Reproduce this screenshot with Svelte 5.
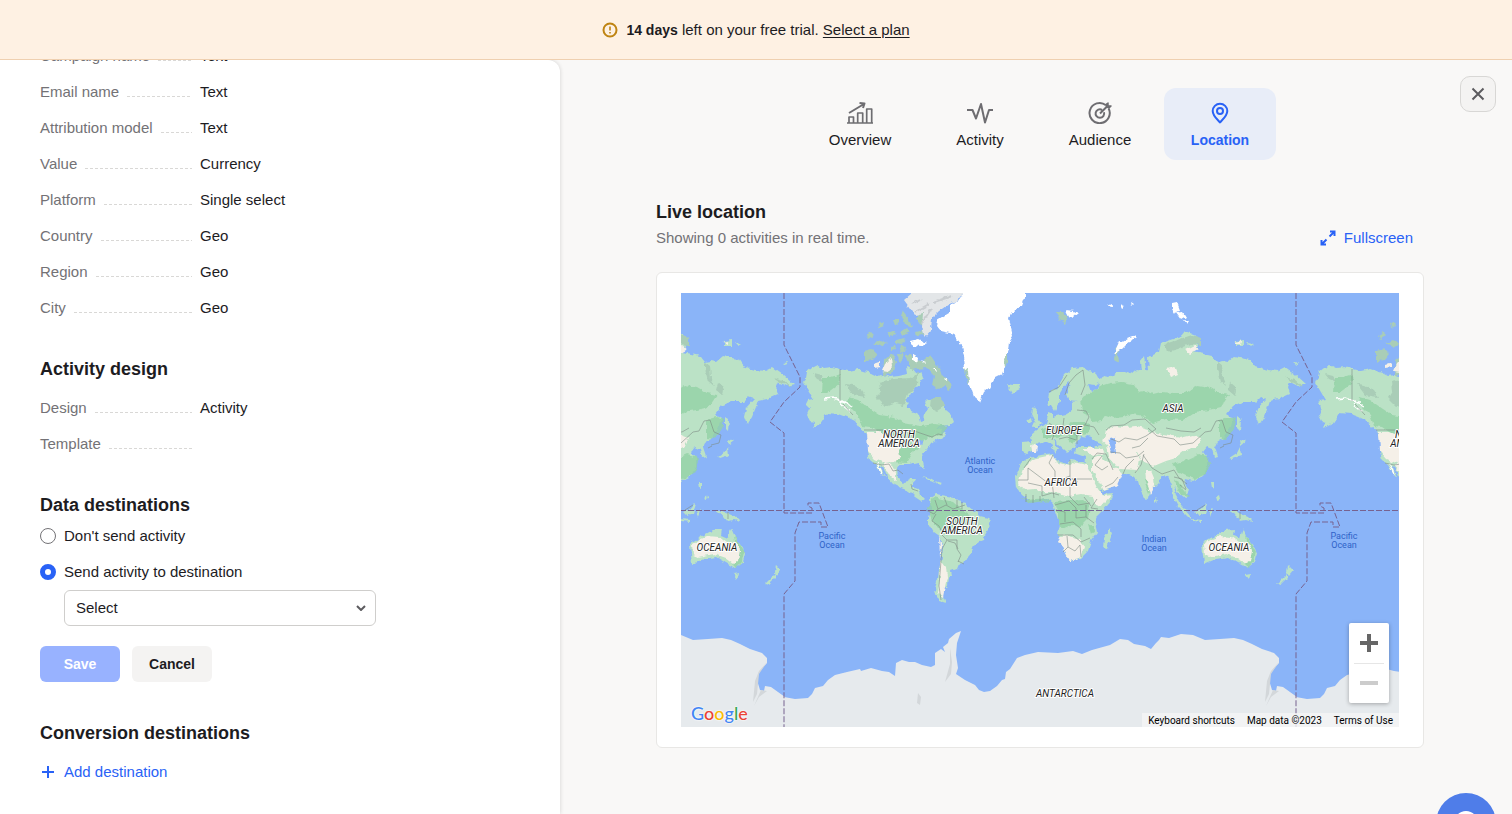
<script>
	const fields = [
		{ name: 'Campaign name', value: 'Text' },
		{ name: 'Email name', value: 'Text' },
		{ name: 'Attribution model', value: 'Text' },
		{ name: 'Value', value: 'Currency' },
		{ name: 'Platform', value: 'Single select' },
		{ name: 'Country', value: 'Geo' },
		{ name: 'Region', value: 'Geo' },
		{ name: 'City', value: 'Geo' }
	];

	const design = [
		{ name: 'Design', value: 'Activity' },
		{ name: 'Template', value: '' }
	];

	const tabs = ['Overview', 'Activity', 'Audience', 'Location'];

	let activeTab = $state('Location');
	let destination = $state('send');

	// one world is 512 units wide, so it is repeated on both sides
	const worlds = [-512, 0, 512];

	const land = [
		// north and central america
		'M803 382l3-4 1-6 5-4 6-3 6 3 8-1 9 2 8 2 9-2 6 2 7 2 6 3 6-1 7 2 9-1 8-2-1-8 6 2 5 6 4-2 2 6-4 3 2 5-6 1-5 8-4 6 1 7 7 4 5 3 2 7 3-1 1-8 3-4-3-7 3-3 7 2 4 5 4-2 3 7 6 5 2 5-5 4-7 1-6 1 5 2-1 4 5-1 1 3-9 5-6 4-4 6-5 6 0 5 2 9-3-3-3-5-9 2-9 0-3 5 1 9 6 5 4-1 2-4 5 0-3 6 0 3 6 2 2 6 4 4-3 2-6-4-6-6-8-3-8-4-6-7-3-8-4-4-1 0 7 13-6-6-4-7-6-5-2-8 1-10-3-9-7-6-4-6-8-4-8-3-12-1-3 5-4 6-8 4 2-6-4-1-3-6 3-7-4-4 2-4 5-1z',
		// south america
		'M930 498l6-4 5 1 6 1 7 1 4 4 7 2 4 6 8 3 3 4 8 2 3 3-2 7-4 7-2 6-8 3-3 7-5 6-3 6-5 1-2 5-6 2 1 5-4 2-1 8-4 3 0 7 3 7-6-2-4-7-1-6 3-9 1-10 3-12 1-12-2-7-7-5-6-10 0-6 3-7z',
		// europe and asia
		'M1048 400l1-7 6-3 5-7 5-9 8-6 8-1 7 3 8 4 4 7-4 4-8-1 3 8 6-4 3-8 3-4 6 1 7-5 9 0 5 2 6-4 5 1-1-10 4-5 2 14 3-1-1-10 5-4 6-3 2-9 12-4 8-3 4-5 10 4 2 11-4 6 10 2 9 2 5 6 6-1 5 1 7-6 9 2 6 1 5 7 13 4 9 1 8-4 10 7 11 10-8 2-8-4-2 5 2 7-11 5-9 2-2 6-4 10-5 8-3-8 2-9 8-9-6-2-5 5-13 0-9 4-6 8 6 4-3 11-7 10-6 4-2 4 3 9-4 1-2-8-5-2-4 5 5 6 0 8-5 10-10 5-8-2-1 6 5 6-4 7-7-6-4-5 3 11 5 9-4-1-5-9-1-11-4-10-5-1-3 6-8 8-3 7-4 3-4-7-3-11-6-6-6-2-13 0 4 5-5 9-15 6-3-6-10-17 1-13-11-4 2-6 18 0 3-2-6-7-10-1-5 7-2 4-7 4-3-3-7-6-5-4 6 9-2 5-6-10-4-2-9 2-3 8-7 3-5-2 0-9 10-1-1-7 6-5 9-7 2-7 1-4 3 1 0 4 13-3 7-4 0-8 6-1-10-1-2-5 4-13-5 3-5 8 0 8-5 10-3-5-6-1z',
		// africa
		'M1033 457l8-2 12-2 1 5 4 3 9 3 4-4 17 3 3 9 6 15 5 7 12-1-2 6-10 12-7 7 3 14-7 9-3 10-7 7-12 3-3-6-5-12-3-9 2-9-5-14-2-8-6-5-17 3-8-6-6-8-1-10 6-14 7-5z',
		// australia and tasmania
		'M1202 543l7-4 7-4 9-5 9-1-1 6 7 3 3-10 4 9 7 9 3 8-2 8-8 6-9-5-10-6-12 2-12 5-1-9z',
		'M1245 574l6-1-2 6z',
		// new zealand
		'M1288 565l5 5-5 6-1-4zM1287 574l0 4-7 7-3-1z',
		// islands of the pacific
		'M1228 511l6 0 7 3 7 3 5 5-7-2-6 1-4-5zM1195 512l7-3 5-6 1 1-3 9-6 3zM1177 501l7 7 7 8 0 4-8-8zM1192 519l10 1 0 2-9-1zM1209 511l4-2-2 5 0 3zM1211 482l3 0 0 7-2-1zM1216 497l3-2 1 4-3 1z',
		// japan and sakhalin
		'M1237 417l4 3-1 11-3-3zM1240 439l6 2-5 4zM1240 447l1 9-9 3-3-1 8-5z',
		// madagascar, sri lanka
		'M1110 528l2 6-5 14-4-1 1-9zM1155 498l2 3-2 2z',
		// british isles, iceland
		'M1033 407l3 4 2 8 4 5-3 3-7 0 3-6-3-6zM1027 420l4-3 1 5-5 2zM1007 384l7 1 5 0 1 4-8 4z',
		// wrangel and new siberian islands
		'M1236 341l8-1 0 6-8 0zM1247 343l6 1-3 2zM1294 363l5-1-2 3z',
		// caribbean
		'M922 477l8 2 7 4-8-2zM936 481l6 2-3 2z'
	];

	const arctic = [
		'M905 355l6-1 4 7 4-2 4 4 2-7 6 0 4 6 6 8 2 6 8 7 1 5-4 2-3-4-6 3-7-4 2-9-7-8-9 1-7 1z',
		'M864 351l8-2 5 5-5 6-8 2zM874 343l7-3 6 3-6 4zM866 335l5-3 3 3-6 4zM878 324l7-2-1 4-5 2zM887 332l6-2 3 5-5 2zM884 360l9-7 3 9-4 12-9 1zM901 332l6-4 3 4-6 3zM896 340l9-2-3 6-6-1z',
		'M903 311l6 8 3 9-6-3-5-8zM893 320l5 0 1 6-4-1zM917 309l7 2-1 14-6-4zM915 332l8-2 1 5-8 1zM890 346l5-1 1 4-5 1zM901 345l5 3-1 4-5-1zM898 354l4-2 1 8-4 3z',
		'M1057 312l6 0 5 4-3 8-5-4zM1114 360l1-10 4-5 2 2-3 6 1 10z'
	];

	const ice = [
		// greenland
		'M963 280v13l-4 7-9 5 0 8-13 8-1 4 5 6 13 3 3 6 5 6 2 10 1 12 3 8 3 12 3 9 6 5 4-10 5-4 5-9 8-4 3-8 1-9 3-8 1-9 3-5-2-9-2-9 4-7 9-5 3-8V280z',
		'M1114 354l5-11 9-5 8-3 0 2-10 7-6 6zM1066 310l8 1 4 2-6 5-3-2zM1108 306l4-2 0 3zM1120 304l5 2-3 2zM1130 302l3 2-2 2z',
		'M1172 303l5-1 3 8-5 4-3-5zM1176 313l7-1 3 5-5 3zM1184 320l5 1-2 3z',
		'M911 341l8-2 8 4-6 4-9-1zM913 354l5 4-1 6-4-3zM921 360l5 2-2 2zM934 369l3 0 0 3zM944 378l3 2-1 2z'
	];

	const ellesmere = 'M904 300l8-7V280h51v13l-6 8-8 3-10 7-7 7-1 12-6 7-3-10 1-14-8 2z';

	// darker forest over the light green
	const forest = [
		'M1081 398l9-5 10-7 10-3 12-1 11 2 5 8 7-1 8 3 8-2 12 1 13 0 11-8 12 2 10 6 10 2-8 12-12 3-14 2-12 8-17-1-14 4-8-7-12-2-9 3-9 1-8-3-4 6-10 1-3-7-6-3z',
		'M1042 430l10-5 12 2 8-5 13 0 6 6-4 6-8 2-6 8-8-9-14 3-9 0zM1219 420l10-3 7 2-2 10-8 10-7-1z',
		'M848 397l10 3 10 7 12 8 14 2 9 6 18 3 14-2 13 2-6 7-10 4-9 3-4 8-8 6-5 9-14-1-2-12-7-14-13-9-8-1-4-11-11-11zM823 377l8 0 10-3-2 10-12 9-5 0z',
		'M928 508l5-11 8 2 12 3 8 7 10 6-4 9-12 0-8 12-8-7-7-8z',
		'M1054 502l15-1 14-1 7 5-2 14-8 8-9-2-9 4-4-7 0-10zM1020 497l7 3 20-2 4 3-20 3zM1088 524l6 2 1 6-4 2z',
		'M1172 464l12-3 15-7 8 2 4 7-5 11-11 5-9-3-10-5zM1173 478l6 3 5 11 5 4-7-1-6-9zM1144 480l6-2 3 8-4 8zM1246 536l6 8 4 8-2 9-6 7-4-4 6-8z'
	];

	// dry ground
	const dry = [
		'M1018 483l5-14 10-10 19-4 5 7 11 4 5-4 14 3 4 9 7 15 5 7 8-1-10 12-6-2-2-9-12-2-12 2-10-3-9-1-8 0-8-3-10 1z',
		'M1092 459l8-3 5 5 15 10 2 5-4 9-15 5-3-6-8-14zM1083 448l16 0 7 5-13 3zM1058 536l10-1 11 5 5 7-4 11-11 3-5-10z',
		'M1106 430l8-4 11 1 12-1 11 3 4 10-4 8-12 5 4 7-2 11-19-1-10-12-2-12-4-3z',
		'M1143 440l9-8 17 3 11 3 13-3 8 3-5 9-10 3-10 8-10 3-12 5-12-5-5-9-5-6zM1167 369l8-2 3 7-7 3zM1184 350l10-5 5 4-9 5z',
		'M867 432l11 0 12 5 9 8 1 13-6 4-10 1-9-4-7-8zM885 463l6 1 5 9 0 8-5-4-8-11z',
		'M1145 470l5 0 3 7 1 13-3 5-5-15z',
		'M939 535l3 12-2 12 6 8 1 10-4 20-5-4 2-16 0-20zM1204 544l8-5 8-3 11 1 8 6 8-1 5 8-2 11-5 3-8-6-11-4-16 3-5-2z',
		'M1235 342l6-1-1 4zM1031 444l7 3-1 5-5 0z'
	];

	const sand = 'M885 364l6-6 1 8-4 6-6-1zM874 364l6-2 0 5-6 1zM913 354l4 2-1 6-3-1z';

	const tundra = [
		'M879 382l14-3 17-1 8-6-1 13-9 9-4 11-9-2-10 4-9-9 4-7zM930 398l10 0 6 7-9 6-8-4z',
		'M1165 344l18-6 9-3 9 3 0 7-11-1-12 5-11 3zM1217 362l5 4 1 13 3 7-6-5-3-12zM1230 383l6 5-1 8-7-6zM1285 377l10 3 8 7-9-4z',
		'M845 384l8 1 9 5 4 7-13-2zM813 374l8 2 4 6-8-3z'
	];

	const borders =
		'M840 369V401M843 404l10 11M864 430h48l8 3 12 4 6-3 5 1M873 463l9 2 7-1 4 7 5-1 5 4M911 484l1 5 6 2M1065 395l4-12 7-8 7-5 2 15-4 10M1049 392l10-5 8-12M1077 410l9 1 3 6-4 8-10 2-7 4-5-5 1-8M1049 423l7 5-4 12M1059 439l8-2 9 3M1070 430l7 6 0 8M1085 425l9 2 5 8M1106 430l5-4 13-1 8-5 13-1 11 10-10 7-9 4-12-2-6 4-8-3M1148 428l9 8 17 3 6 6 13-2 12-11 6-1 5-10 6-1 4 12 7 3-2 8-8 2M1166 428l15 3 13 1 7-4M1132 448l8-2 8-8M1110 452l10 1 6 5 12-2 6-5M1123 474l3-7 8-8M1135 473l6-8 3-11M1143 455l9 13 10 6 12-4 5 8 8 6M1092 459l5-6 9 1 7 16M1102 456l-7 9 7 5 6-4M1105 487l8-4 5-6M1174 477l8 2 4 10M1220 448l4-2M1180 485l6 5M1240 512v7M1197 510l8-5M1053 455l-4 8 6 8 0 12M1018 480h10v-12l20 15 6-1 16-6M1070 460v18l8 4M1072 479h20M1031 458l-7 10M1028 483l14 3 0 10M1042 496l10-3 7 2M1052 482l2 16M1070 479l0 18 8 8 12-2M1055 505l14-4 7 7 0 10M1056 510l9 2 0 10M1060 524l13-2 8 7 0 8M1076 518l10-1 8 6M1086 517l0-12M1058 535h15l8 7 9-4M1067 536l1 11-5 5M1068 547l7 4 5-6 1 12M1097 499l-6 9 7 1M1084 497l7 9M1026 494v8M1033 495v8M1040 496v5M926 510l8 4 4-5-3-9M938 509l8-4 7 4 12-4M936 514l-4 7 7 5 4 8M944 497l3 8M941 534l6 6 10 0 0 9 4 6-3 7M947 540l-5 9-1 12-2 25 2 14M958 549l-3-6-7-2M958 561l6 3M957 500l0 8M962 502v7';

	const snow = 'M824 399l9-1 9 3 9 5M841 404l10 8M877 463l5 11M842 402l7 0';

	const dateLine =
		'M784 293V345L800 377V387L784 402 770 422 784 433V513H812V508L808 506V503H819L828 527H821V522H799L795 533V581L784 594V727';

	const antarctica =
		'M784 697l11 2 13-1 4-4 3-6 8-2 5-6 7-5 12-3 13-3 1 2 10-3 11 3 7 1 6 4 1-13 6-3 7 2 6 0 7 3 9 2 4-2 0-12 6-4 4 3-2-5 5-4 1-4 7-6 5-2-4 12-1 12 2 13-2 6 9 6 10 5 4 5 5 2 6-1 7-5 5-6 3-1 1-7 4-3 7-11 8-3 13-3 20 1 15-2 9 3 10-4 18-5 10-6 8 1 6 4 11 2 6 3 5-6 3-3 2-3 8 1 12-4 12 1 12 5 15-1 14-1 9 2 9 4 10 5 12 4 5 5 0 5-8 9-2 8 3 10 4 1 1-5 6 1L1297 697V728H784z';

	const places = [
		{ x: 899, y: 438, lines: ['NORTH', 'AMERICA'] },
		{ x: 962, y: 525, lines: ['SOUTH', 'AMERICA'] },
		{ x: 1064, y: 434, lines: ['EUROPE'] },
		{ x: 1061, y: 486, lines: ['AFRICA'] },
		{ x: 1173, y: 412, lines: ['ASIA'] },
		{ x: 1229, y: 551, lines: ['OCEANIA'] },
		{ x: 1065, y: 697, lines: ['ANTARCTICA'] }
	];

	const oceans = [
		{ x: 980, y: 464, lines: ['Atlantic', 'Ocean'] },
		{ x: 1154, y: 542, lines: ['Indian', 'Ocean'] },
		{ x: 832, y: 539, lines: ['Pacific', 'Ocean'] }
	];

	// repeat the labels with the worlds, and leave out those beyond the edge
	function visible(list) {
		return worlds
			.flatMap((shift) => list.map((place) => ({ ...place, x: place.x + shift })))
			.filter((place) => place.x > 681 && place.x < 1420);
	}
</script>

{#snippet row(item)}
	<div class="row">
		<dt>{item.name}<span class="leader"></span></dt>
		<dd>{item.value}</dd>
	</div>
{/snippet}

{#snippet label(place)}
	<text x={place.x} y={place.y}>
		{#each place.lines as line, i}
			<tspan x={place.x} dy={i ? 9 : 0}>{line}</tspan>
		{/each}
	</text>
{/snippet}

<div class="page">
	<div class="banner">
		<svg width="16" height="16" viewBox="0 0 16 16" fill="none" stroke="#bf8412" stroke-width="2">
			<circle cx="8" cy="8" r="6.5" />
			<path d="M8 4.5v4M8 10v1.5" stroke-width="1.6" />
		</svg>
		<p><strong>14 days</strong> left on your free trial. <a href="/plans">Select a plan</a></p>
	</div>

	<div class="columns">
		<section class="settings">
			<dl class="scrolled">
				{#each fields as item}
					{@render row(item)}
				{/each}
			</dl>

			<h2>Activity design</h2>
			<dl>
				{#each design as item}
					{@render row(item)}
				{/each}
			</dl>

			<h2 class="tight">Data destinations</h2>
			<form onsubmit={(e) => e.preventDefault()}>
				<label class="option">
					<input type="radio" name="destination" value="none" bind:group={destination} />
					Don't send activity
				</label>
				<label class="option">
					<input type="radio" name="destination" value="send" bind:group={destination} />
					Send activity to destination
				</label>
				<div class="select">
					<select aria-label="Destination">
						<option>Select</option>
					</select>
					<svg width="10" height="6" viewBox="0 0 10 6" fill="none" stroke="#5c5b5f" stroke-width="2">
						<path d="M1 1l4 4 4-4" />
					</svg>
				</div>
				<div class="actions">
					<button type="submit" class="save">Save</button>
					<button type="button" class="cancel">Cancel</button>
				</div>
			</form>

			<h2>Conversion destinations</h2>
			<button type="button" class="link">
				<svg width="16" height="16" viewBox="0 0 16 16" stroke="currentColor" stroke-width="2">
					<path d="M8 2v12M2 8h12" />
				</svg>
				Add destination
			</button>
		</section>

		<main>
			<button type="button" class="close" aria-label="Close">
				<svg width="14" height="14" viewBox="0 0 14 14" stroke="#5c5b5f" stroke-width="2">
					<path d="M1.500 1.500l11 11M12.500 1.500l-11 11" />
				</svg>
			</button>

			<nav>
				{#each tabs as tab}
					<button type="button" class="tab" class:active={tab === activeTab} onclick={() => (activeTab = tab)}>
						<svg width="28" height="24" viewBox="0 0 28 24" fill="none" stroke="currentColor" stroke-width="2" stroke-linejoin="round">
							{#if tab === 'Overview'}
								<path d="M1 23h26M3 22.500v-5.500h4.500v5.500M11.700 22.500V13h5V22.500M20.700 22.500V9h5V22.500" stroke-width="1.700" />
								<path d="M3 13L18 4M13.500 3l5 .5-1.500 4.500" />
							{:else if tab === 'Activity'}
								<path d="M1 10h5.500L10 18.500l5-14.500L19 22.500l4-12.500h4" />
							{:else if tab === 'Audience'}
								<path d="M20 5.200a10.100 10.100 0 1 0 2.500 3" />
								<path d="M16 9.800a4.300 4.300 0 1 0 2 2.500M14 13.500l7-7" />
								<path d="M20.500 7V4l1.500-1v3h3l-1.500 1.500z" stroke-width="1.500" />
							{:else}
								<path d="M14 22.500c-2-2.500-7.300-6.500-7.300-11.500a7.300 7.300 0 0 1 14.600 0C21.300 16 16 20 14 22.500z" />
								<circle cx="14" cy="11" r="3" />
							{/if}
						</svg>
						{tab}
					</button>
				{/each}
			</nav>

			<header>
				<div>
					<h2>Live location</h2>
					<p>Showing 0 activities in real time.</p>
				</div>
				<button type="button" class="link">
					<svg width="16" height="16" viewBox="0 0 16 16" fill="none" stroke="currentColor" stroke-width="2">
						<path d="M10 1.500h4.500V6M14 2L9.500 6.500M6 14.500H1.500V10M2 14l4.500-4.500" />
					</svg>
					Fullscreen
				</button>
			</header>

			<div class="card">
				<div class="map">
					<svg class="world" viewBox="681 293 718 434" preserveAspectRatio="xMidYMid slice">
						<!-- breaks the straight segments up into a rugged coast -->
						<filter id="coast" filterUnits="userSpaceOnUse" x="671" y="283" width="738" height="454">
							<feTurbulence type="fractalNoise" baseFrequency="0.18" numOctaves="2" seed="4" />
							<feDisplacementMap in="SourceGraphic" scale="5" xChannelSelector="R" yChannelSelector="G" />
						</filter>

						<g filter="url(#coast)">
							{#each worlds as shift}
								<g transform="translate({shift} 0)">
									{#each land as d}<path class="land" {d} />{/each}
									{#each tundra as d}<path class="tundra" {d} />{/each}
									{#each forest as d}<path class="forest" {d} />{/each}
									{#each dry as d}<path class="dry" {d} />{/each}
									{#each arctic as d}<path class="tundra" {d} />{/each}
									<path class="dry" d={sand} />
									<path class="ellesmere" d={ellesmere} />
									<path d="M912 304l9-5M915 312l14-8M922 323l9-14M934 302l18-6" stroke="#c9cdd0" stroke-width="2" />
									{#each ice as d}<path class="ice" {d} />{/each}
									<path class="tundra" d="M965 367l3 4 1 14-3-7zM1004 359l4-6 0 10-3 4z" />
									<path class="sea" d="M1110 438l4-1 1 5 1 12-5-2-2-6zM1083 441l5-5 4 1-1 3 12 5-9 1-10 1zM914 440l6-1 3 4-3 3z" />
									<path class="snow" d={snow} />
								</g>
							{/each}
						</g>
						{#each worlds as shift}
							<g transform="translate({shift} 0)">
								<path class="borders" d={borders} />
								<path class="antarctica" d={antarctica} />
								<path d="M1279 662l-8 12-2 20-4 8 2-21 4-10zM1273 690l6 1-8 6-5 9zM950 648l2 14-1 12-6 8 5-18zM918 693l3 4-1 8-3-2z" fill="#d3d7da" />
								<path class="line" d={dateLine} />
								<path class="line" d="M784 510.500H1296" />
							</g>
						{/each}
						<g class="places">
							{#each visible(places) as place}{@render label(place)}{/each}
						</g>
						<g class="oceans">
							{#each visible(oceans) as place}{@render label(place)}{/each}
						</g>
					</svg>

					<a class="google" href="/maps" aria-label="Google">
						<span class="blue">G</span><span class="red">o</span><span class="yellow">o</span><span class="blue">g</span><span class="green">l</span><span class="red">e</span>
					</a>

					<div class="zoom">
						<button type="button" aria-label="Zoom in">
							<svg width="18" height="18" viewBox="0 0 18 18"><path d="M7 0h4v7h7v4h-7v7H7v-7H0V7h7z" fill="#666" /></svg>
						</button>
						<button type="button" aria-label="Zoom out" disabled>
							<svg width="18" height="18" viewBox="0 0 18 18"><path d="M0 7h18v4H0z" fill="#ccc" /></svg>
						</button>
					</div>

					<div class="legal">
						<button type="button">Keyboard shortcuts</button>
						<span>Map data ©2023</span>
						<a href="/terms">Terms of Use</a>
					</div>
				</div>
			</div>
		</main>
	</div>

	<button type="button" class="chat" aria-label="Open chat"><span></span></button>
</div>

<style>
	:global(body) {
		margin: 0;
		background: #f9f8f7;
	}

	.page {
		display: flex;
		flex-direction: column;
		min-height: 100vh;
		font: 15px/24px 'Liberation Sans', Arial, sans-serif;
		color: #1d1c1f;
	}

	button,
	select {
		font: inherit;
		color: inherit;
		cursor: pointer;
	}

	h2 {
		margin: 0;
		font-size: 18px;
		line-height: 24px;
	}

	p,
	dl,
	dd {
		margin: 0;
	}

	.banner {
		display: flex;
		align-items: center;
		justify-content: center;
		gap: 8px;
		height: 59px;
		background: #fef1e3;
		border-bottom: 1px solid #efd0b0;
		z-index: 1;

		strong {
			font-size: 14px;
		}

		a {
			color: inherit;
			text-underline-offset: 2px;
		}
	}

	.columns {
		display: grid;
		grid-template-columns: minmax(0, 560px) minmax(0, 1fr);
		flex: 1;
	}

	.settings {
		box-sizing: border-box;
		padding: 0 40px 24px;
		background: #fff;
		border-top-right-radius: 12px;
		box-shadow: 0 0 4px rgba(0, 0, 0, 0.16);

		h2 {
			margin: 32px 0 10px;
			line-height: 22px;
		}

		h2.tight {
			margin-bottom: 2px;
		}

		form + h2 {
			margin-top: 40px;
		}
	}

	.scrolled {
		margin-top: -22px;
	}

	.row {
		display: flex;
		gap: 8px;
		line-height: 36px;
	}

	dt {
		display: flex;
		align-items: baseline;
		gap: 8px;
		width: 152px;
		color: #737276;
	}

	.leader {
		flex: 1;
		height: 1px;
		background: repeating-linear-gradient(90deg, #d9d8d6 0 3px, transparent 3px 5px);
	}

	.option {
		display: flex;
		align-items: center;
		gap: 8px;
		height: 36px;

		input {
			appearance: none;
			box-sizing: border-box;
			width: 16px;
			height: 16px;
			margin: 0;
			border: 1px solid #737276;
			border-radius: 50%;
			background: #fff;
		}

		input:checked {
			border: 5px solid #2962f6;
		}
	}

	.select {
		position: relative;
		max-width: 312px;
		margin-left: 24px;

		select {
			appearance: none;
			display: block;
			width: 100%;
			height: 36px;
			padding: 0 32px 0 11px;
			border: 1px solid #cfcecc;
			border-radius: 6px;
			background: #fff;
		}

		svg {
			position: absolute;
			top: 15px;
			right: 10px;
			pointer-events: none;
		}
	}

	.actions {
		display: flex;
		gap: 12px;
		margin-top: 20px;

		button {
			width: 80px;
			height: 36px;
			padding: 0;
			border: none;
			border-radius: 6px;
			font-size: 14px;
			font-weight: bold;
		}

		.save {
			background: #98b2ff;
			color: #fff;
		}

		.cancel {
			background: #f4f3f2;
		}
	}

	.link {
		display: flex;
		align-items: center;
		gap: 8px;
		height: 36px;
		padding: 0;
		border: none;
		background: none;
		color: #2962f6;
	}

	main {
		position: relative;
		padding: 28px 88px 24px 96px;
	}

	.close {
		position: absolute;
		top: 16px;
		right: 16px;
		display: grid;
		place-content: center;
		width: 36px;
		height: 36px;
		padding: 0;
		border: 1px solid #d8d7d5;
		border-radius: 10px;
		background: #f4f3f2;
	}

	nav {
		display: flex;
		justify-content: center;
		gap: 8px;
	}

	.tab {
		display: flex;
		flex-direction: column;
		align-items: center;
		gap: 4px;
		box-sizing: border-box;
		width: 112px;
		height: 72px;
		padding: 12px 0 8px;
		border: none;
		border-radius: 12px;
		background: none;

		svg {
			color: #6e6d71;
		}
	}

	.tab.active {
		background: #e8edf8;
		color: #2962f6;
		font-size: 14px;
		font-weight: bold;

		svg {
			color: inherit;
		}
	}

	header {
		display: flex;
		justify-content: space-between;
		align-items: flex-end;
		max-width: 768px;
		margin: 40px auto 0;

		p {
			line-height: 28px;
			color: #737276;
		}

		.link {
			height: 28px;
			margin-right: 11px;
		}
	}

	.card {
		box-sizing: border-box;
		max-width: 768px;
		margin: 20px auto 0;
		padding: 20px 24px;
		border: 1px solid #e8e7e5;
		border-radius: 6px;
		background: #fff;
	}

	.map {
		position: relative;
		height: 434px;
		overflow: hidden;
		font-family: Roboto, Arial, sans-serif;
	}

	.world {
		display: block;
		width: 100%;
		height: 100%;
		background: #8ab4f8;
	}

	.land {
		fill: #bbe2c6;
	}

	.forest {
		fill: #94d2a5;
		fill-opacity: 0.8;
	}

	.tundra {
		fill: #a9cdb7;
	}

	.dry {
		fill: #f5f0e8;
	}

	.ellesmere {
		fill: #e3e6e8;
	}

	.ice {
		fill: #fff;
	}

	.sea {
		fill: #8ab4f8;
	}

	.antarctica {
		fill: #e6eaed;
	}

	.borders {
		fill: none;
		stroke: #7d8c84;
		stroke-width: 0.6;
	}

	.snow {
		fill: none;
		stroke: #fff;
		stroke-width: 1.4;
	}

	.line {
		fill: none;
		stroke: #77628f;
		stroke-width: 1;
		stroke-dasharray: 6 2;
	}

	.places text {
		fill: #222;
		stroke: #fff;
		stroke-width: 2px;
		stroke-linejoin: round;
		paint-order: stroke;
		font-size: 10px;
		font-style: italic;
		text-anchor: middle;
	}

	.oceans text {
		fill: #2f63c8;
		font-size: 9px;
		text-anchor: middle;
	}

	.google {
		position: absolute;
		left: 10px;
		bottom: 2px;
		font: 500 18px/24px Lato, sans-serif;
		text-decoration: none;
		text-shadow: 0 0 2px #fff, 0 0 2px #fff;

		.blue {
			color: #4285f4;
		}

		.red {
			color: #ea4335;
		}

		.yellow {
			color: #fbbc04;
		}

		.green {
			color: #34a853;
		}
	}

	.zoom {
		position: absolute;
		right: 10px;
		bottom: 24px;
		width: 40px;
		background: #fff;
		border-radius: 2px;
		box-shadow: 0 1px 4px rgba(0, 0, 0, 0.3);

		button {
			display: grid;
			place-content: center;
			width: 100%;
			height: 40px;
			padding: 0;
			border: none;
			background: none;
		}

		button + button::before {
			content: '';
			position: absolute;
			inset: 40px 5px auto;
			height: 1px;
			background: #e6e6e6;
		}
	}

	.legal {
		position: absolute;
		right: 0;
		bottom: 0;
		display: flex;
		font-size: 10px;
		line-height: 12px;
		color: #000;

		> * {
			padding: 2px 6px 0;
			border: none;
			background: rgba(245, 245, 245, 0.8);
			color: inherit;
			text-decoration: none;
		}
	}

	.chat {
		position: fixed;
		right: 16px;
		bottom: -39px;
		width: 60px;
		height: 60px;
		padding: 0;
		border: none;
		border-radius: 50%;
		background: #4f7de9;

		span {
			display: block;
			width: 24px;
			height: 24px;
			margin: 0 auto;
			border-radius: 50%;
			background: #fff;
		}
	}
</style>
